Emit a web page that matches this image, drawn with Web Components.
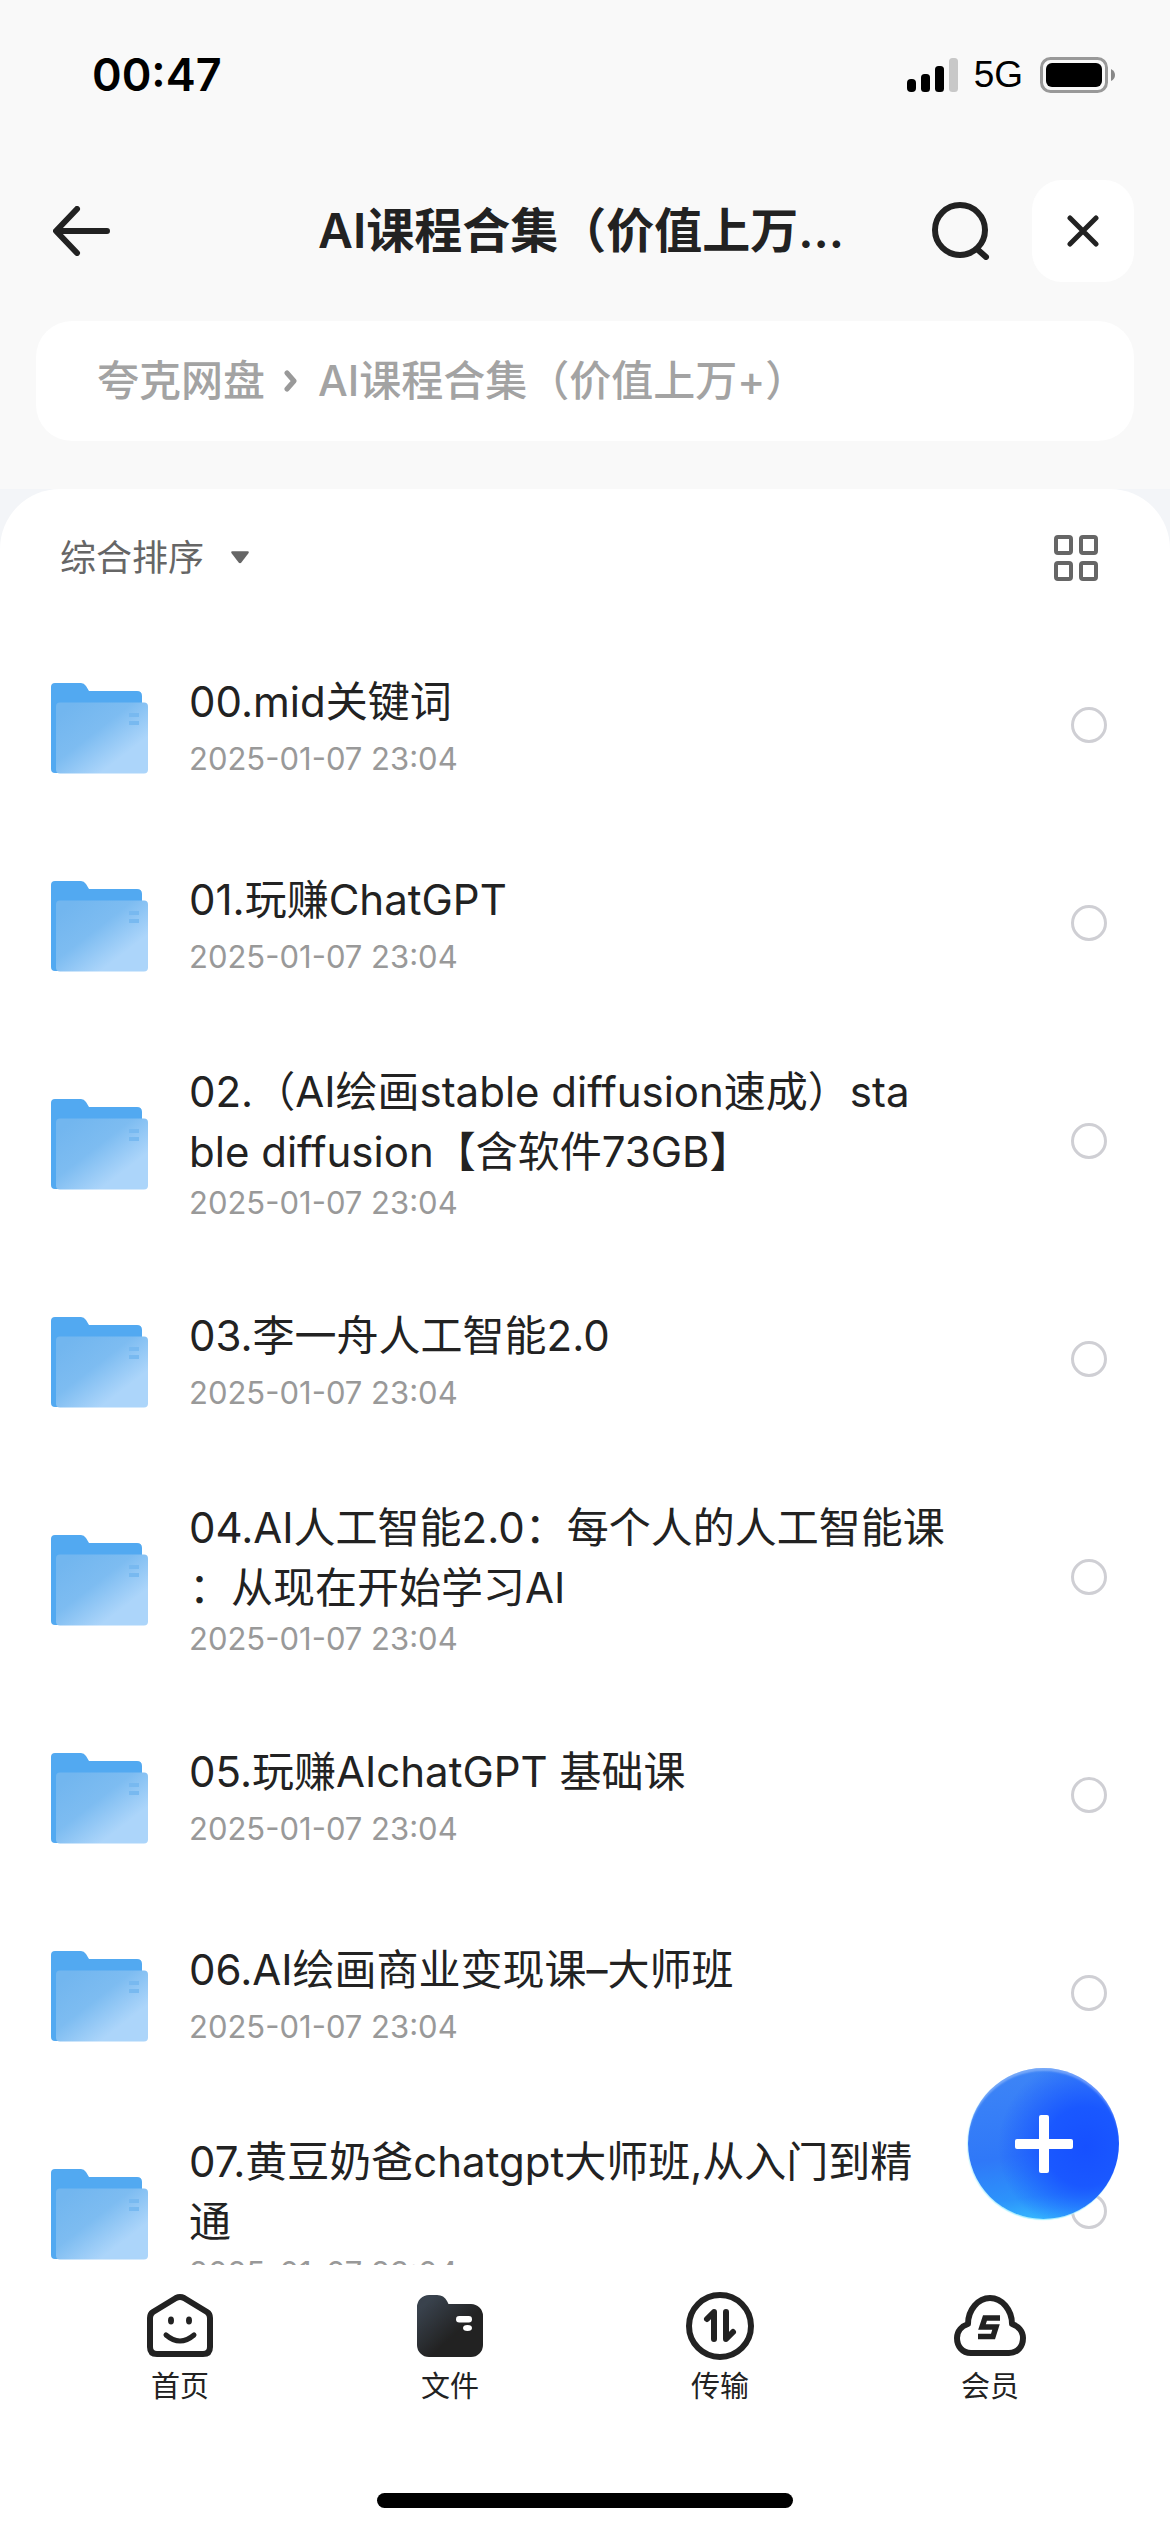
<!DOCTYPE html>
<html lang="zh">
<head>
<meta charset="utf-8">
<title>夸克网盘</title>
<style>
html, body { margin: 0; padding: 0; }
body {
	width: 1170px;
	height: 2532px;
	overflow: hidden;
	background: linear-gradient(#f9f9f9 489px, #f3f5f8 489px);
	font-family: Inter, "Noto Sans CJK SC", sans-serif;
	color: #222;
}
.page { display: flex; flex-direction: column; height: 2532px; position: relative; }
</style>
</head>
<body>
<div class="page">
	<status-bar time="00:47"></status-bar>
	<nav-bar>AI课程合集（价值上万...</nav-bar>
	<path-crumb root="夸克网盘">AI课程合集（价值上万+）</path-crumb>
	<file-panel>
		<file-row date="2025-01-07 23:04">00.mid关键词</file-row>
		<file-row date="2025-01-07 23:04">01.玩赚ChatGPT</file-row>
		<file-row date="2025-01-07 23:04" lines="2">02.（AI绘画stable diffusion速成）sta<br>ble diffusion【含软件73GB】</file-row>
		<file-row date="2025-01-07 23:04">03.李一舟人工智能2.0</file-row>
		<file-row date="2025-01-07 23:04" lines="2">04.AI人工智能2.0：每个人的人工智能课<br>：从现在开始学习AI</file-row>
		<file-row date="2025-01-07 23:04">05.玩赚AIchatGPT 基础课</file-row>
		<file-row date="2025-01-07 23:04">06.AI绘画商业变现课–大师班</file-row>
		<file-row date="2025-01-07 23:04" lines="2">07.黄豆奶爸chatgpt大师班,从入门到精<br>通</file-row>
	</file-panel>
	<tab-bar>
		<tab-item label="首页" icon="home"></tab-item>
		<tab-item label="文件" icon="files"></tab-item>
		<tab-item label="传输" icon="transfer"></tab-item>
		<tab-item label="会员" icon="vip"></tab-item>
	</tab-bar>
	<add-fab></add-fab>
</div>

<script>
const statusBarTemplate = document.createElement('template');
statusBarTemplate.innerHTML = `
<style>
:host { display: flex; align-items: center; height: 150px; box-sizing: border-box; padding: 0 55px 0 92px; flex: none; color: #000; }
.time { font: 600 45px/50px Inter, sans-serif; letter-spacing: 0; }
.right { margin-left: auto; display: flex; align-items: center; }
.net { font: 400 37px/40px "Liberation Sans", sans-serif; margin: 0 17px 0 16px; color: #000; }
svg { display: block; }
</style>
<span class="time"></span>
<div class="right">
	<svg width="51" height="34" viewBox="0 0 51 34">
		<rect x="0" y="21" width="9" height="13" rx="4" fill="#000"/>
		<rect x="14" y="16" width="9" height="18" rx="3.5" fill="#000"/>
		<rect x="28" y="8" width="9" height="26" rx="3.5" fill="#000"/>
		<rect x="42" y="0" width="9" height="34" rx="3.5" fill="#c8c8c8"/>
	</svg>
	<span class="net">5G</span>
	<svg width="75" height="36" viewBox="0 0 75 36">
		<rect x="1.5" y="1.5" width="65" height="33" rx="9" fill="none" stroke="#999" stroke-width="3"/>
		<rect x="6" y="6" width="56" height="24" rx="6" fill="#000"/>
		<path d="M71 12 q4 2 4 6 t-4 6 Z" fill="#888"/>
	</svg>
</div>`;

class StatusBar extends HTMLElement {
	constructor() {
		super();
		this.attachShadow({ mode: 'open' }).append(statusBarTemplate.content.cloneNode(true));
		this.shadowRoot.querySelector('.time').textContent = this.getAttribute('time');
	}
}
customElements.define('status-bar', StatusBar);

const navBarTemplate = document.createElement('template');
navBarTemplate.innerHTML = `
<style>
:host { display: flex; align-items: center; height: 102px; margin-top: 30px; padding: 0 36px 0 53px; flex: none; }
.title { margin-left: 207px; font: 600 48px/60px Inter, "Noto Sans CJK SC", sans-serif; color: #222; white-space: nowrap; }
.search { margin-left: auto; margin-right: 42px; display: block; }
.close { width: 102px; height: 102px; border-radius: 30px; background: #fff; display: flex; align-items: center; justify-content: center; }
svg { display: block; flex: none; }
</style>
<svg width="58" height="50" viewBox="0 0 58 50" fill="none" stroke="#222" stroke-width="6" stroke-linecap="round" stroke-linejoin="round">
	<path d="M54 25 H4 M24 3 L3 25 L24 47"/>
</svg>
<span class="title"><slot></slot></span>
<svg class="search" width="58" height="58" viewBox="0 0 58 58" fill="none" stroke="#222" stroke-width="6" stroke-linecap="round">
	<circle cx="28" cy="28" r="25"/>
	<path d="M45 47 L54 55"/>
</svg>
<div class="close">
	<svg width="32" height="32" viewBox="0 0 32 32" fill="none" stroke="#222" stroke-width="5" stroke-linecap="round">
		<path d="M3 3 L29 29 M29 3 L3 29"/>
	</svg>
</div>`;

class NavBar extends HTMLElement {
	constructor() {
		super();
		this.attachShadow({ mode: 'open' }).append(navBarTemplate.content.cloneNode(true));
	}
}
customElements.define('nav-bar', NavBar);

const pathCrumbTemplate = document.createElement('template');
pathCrumbTemplate.innerHTML = `
<style>
:host { display: flex; align-items: center; height: 120px; margin: 39px 36px 48px; padding-left: 61px; background: #fff; border-radius: 36px; flex: none; font: 500 42px/50px Inter, "Noto Sans CJK SC", sans-serif; color: #a3a3a3; }
svg { margin: 0 20px 0 19px; display: block; }
</style>
<span class="root"></span>
<svg width="14" height="26" viewBox="0 0 14 26" fill="none" stroke="#999" stroke-width="5" stroke-linecap="round" stroke-linejoin="round">
	<path d="M3 5 L10 13 L3 21"/>
</svg>
<span><slot></slot></span>`;

class PathCrumb extends HTMLElement {
	constructor() {
		super();
		this.attachShadow({ mode: 'open' }).append(pathCrumbTemplate.content.cloneNode(true));
		this.shadowRoot.querySelector('.root').textContent = this.getAttribute('root');
	}
}
customElements.define('path-crumb', PathCrumb);

const filePanelTemplate = document.createElement('template');
filePanelTemplate.innerHTML = `
<style>
:host { display: flex; flex-direction: column; flex: 1; min-height: 0; background: #fff; border-radius: 60px 60px 0 0; overflow: hidden; }
.sort { display: flex; align-items: center; height: 137px; padding: 0 72px 0 60px; flex: none; font: 400 36px/46px Inter, "Noto Sans CJK SC", sans-serif; color: #666; box-sizing: border-box; }
.arrow { margin-left: 26px; display: block; }
.grid { margin-left: auto; display: block; }
.rows { flex: 1; min-height: 0; overflow: hidden; }
</style>
<div class="sort">
	<span>综合排序</span>
	<svg class="arrow" width="20" height="15" viewBox="0 0 22 16"><path d="M2.5 1 H19.5 Q21.5 1 20.5 3 L12.5 13.5 Q11 15 9.5 13.5 L1.5 3 Q0.5 1 2.5 1 Z" fill="#666"/></svg>
	<svg class="grid" width="44" height="46" viewBox="0 0 44 46" fill="none" stroke="#666" stroke-width="4">
		<rect x="2" y="2" width="15" height="16" rx="2"/>
		<rect x="27" y="2" width="15" height="16" rx="2"/>
		<rect x="2" y="28" width="15" height="16" rx="2"/>
		<rect x="27" y="28" width="15" height="16" rx="2"/>
	</svg>
</div>
<div class="rows"><slot></slot></div>`;

class FilePanel extends HTMLElement {
	constructor() {
		super();
		this.attachShadow({ mode: 'open' }).append(filePanelTemplate.content.cloneNode(true));
	}
}
customElements.define('file-panel', FilePanel);

let folderIdCounter = 0;

class FileRow extends HTMLElement {
	constructor() {
		super();
		const id = 'folder-fill-' + (folderIdCounter++);
		const twoLines = this.getAttribute('lines') === '2';
		this.attachShadow({ mode: 'open' }).innerHTML = `
<style>
:host { display: flex; align-items: center; height: ${twoLines ? 238 : 198}px; padding: 0 63px 0 50px; box-sizing: border-box; }
.folder { display: block; flex: none; margin-top: 6px; }
.text { flex: none; width: 770px; margin-left: 41px; margin-top: ${twoLines ? 3 : 0}px; }
.name { font: 400 42px/60px Inter, "Noto Sans CJK SC", sans-serif; color: #222; white-space: nowrap; }
.date { font: 400 31px/40px Inter, "Noto Sans CJK SC", sans-serif; color: #999; margin-top: ${twoLines ? 1 : 7}px; }
.radio { margin-left: auto; width: 36px; height: 36px; box-sizing: border-box; border: 3px solid #cfcfd4; border-radius: 50%; flex: none; }
</style>
<svg class="folder" width="98" height="91" viewBox="0 0 98 91">
	<defs>
		<linearGradient id="${id}" x1="0.1" y1="0.1" x2="0.9" y2="0.9">
			<stop offset="0" stop-color="#72b6ef"/>
			<stop offset="0.4" stop-color="#7dbcf1"/>
			<stop offset="0.8" stop-color="#acd5fa"/>
			<stop offset="1" stop-color="#acd5fa"/>
		</linearGradient>
	</defs>
	<path d="M5 0 H31 Q34 0 36 3 L39 8 H87 Q92 8 92 13 V86 Q92 90 88 90 H5 Q1 90 1 86 V4 Q1 0 5 0 Z" fill="#52a9f1"/>
	<rect x="6" y="19.500" width="92" height="71" rx="4" fill="url(#${id})"/>
	<rect x="79" y="30" width="10" height="4" fill="#78b9f0"/>
	<rect x="79" y="38" width="10" height="4" fill="#78b9f0"/>
</svg>
<div class="text">
	<div class="name"><slot></slot></div>
	<div class="date"></div>
</div>
<div class="radio"></div>`;
		this.shadowRoot.querySelector('.date').textContent = this.getAttribute('date');
	}
}
customElements.define('file-row', FileRow);

const tabIcons = {
	home: `<svg width="66" height="66" viewBox="0 0 66 66" fill="none" stroke="#222" stroke-width="6" stroke-linecap="round" stroke-linejoin="round">
		<path d="M3 25 Q3 21 6 19 L29 5 Q33 3 37 5 L60 19 Q63 21 63 25 V54 Q63 61 56 61 H10 Q3 61 3 54 Z"/>
		<path d="M19 42 Q33 54 47 42" stroke-width="5"/>
		<ellipse cx="24" cy="27.500" rx="3" ry="4" fill="#222" stroke="none"/>
		<ellipse cx="42" cy="27.500" rx="3" ry="4" fill="#222" stroke="none"/>
	</svg>`,
	files: `<svg width="66" height="66" viewBox="0 0 66 66">
		<defs><linearGradient id="tab-files" x1="0.05" y1="0.05" x2="0.6" y2="0.6">
			<stop offset="0.15" stop-color="#39424d"/><stop offset="1" stop-color="#222"/>
		</linearGradient></defs>
		<path d="M0 14 A12 12 0 0 1 12 2 H20 Q27 2 30 8 L31.500 11 H54 A12 12 0 0 1 66 23 V52 A12 12 0 0 1 54 64 H12 A12 12 0 0 1 0 52 Z" fill="url(#tab-files)"/>
		<rect x="39" y="23" width="16" height="6.500" rx="3.250" fill="#fff"/>
		<ellipse cx="50.500" cy="35" rx="4.500" ry="3" fill="#fff"/>
	</svg>`,
	transfer: `<svg width="70" height="70" viewBox="0 0 70 70" fill="none" stroke="#222" stroke-width="6" stroke-linecap="round" stroke-linejoin="round">
		<circle cx="35" cy="35" r="31"/>
		<path d="M29 48 V21 L22 28"/>
		<path d="M41 21 V48 L48 41"/>
	</svg>`,
	vip: `<svg width="72" height="62" viewBox="0 -2 72 62" fill="none" stroke="#222" stroke-width="6" stroke-linejoin="round">
		<path d="M17 56 C8 56 3 49 3 41 C3 34 8 29 14 27 C14 13 24 1 36 1 C48 1 58 13 58 27 C64 29 69 34 69 41 C69 49 64 56 55 56 Z"/>
		<path d="M46 21 H31 L28 30 H42 L39 39.500 H24" stroke-width="5.500" stroke-linejoin="miter"/>
	</svg>`
};

class TabItem extends HTMLElement {
	constructor() {
		super();
		this.attachShadow({ mode: 'open' }).innerHTML = `
<style>
:host { display: flex; flex-direction: column; align-items: center; flex: 1; }
.icon { height: 70px; display: flex; align-items: center; justify-content: center; }
svg { display: block; }
.label { font: 400 29px/36px Inter, "Noto Sans CJK SC", sans-serif; color: #222; margin-top: 8px; }
</style>
<div class="icon">${tabIcons[this.getAttribute('icon')]}</div>
<span class="label">${this.getAttribute('label')}</span>`;
	}
}
customElements.define('tab-item', TabItem);

const tabBarTemplate = document.createElement('template');
tabBarTemplate.innerHTML = `
<style>
:host { display: flex; flex-direction: column; height: 267px; background: #fff; flex: none; box-sizing: border-box; padding-top: 26px; }
.items { display: flex; padding: 0 45px; }
.indicator { width: 416px; height: 15px; border-radius: 8px; background: #000; margin: auto auto 24px; }
</style>
<div class="items"><slot></slot></div>
<div class="indicator"></div>`;

class TabBar extends HTMLElement {
	constructor() {
		super();
		this.attachShadow({ mode: 'open' }).append(tabBarTemplate.content.cloneNode(true));
	}
}
customElements.define('tab-bar', TabBar);

const addFabTemplate = document.createElement('template');
addFabTemplate.innerHTML = `
<style>
:host { position: absolute; left: 968px; top: 2068px; width: 151px; height: 151px; border-radius: 50%; display: flex; align-items: center; justify-content: center;
	background:
		radial-gradient(circle at 78% 52%, #1650ff 0, #1a58ff 28%, rgba(26,88,255,0) 62%),
		linear-gradient(172deg, #3f86f6 0%, #2f78f8 55%, #2c93fb 80%, #38c4ff 98%);
	box-shadow: inset 0 4px 2px -1px rgba(255,255,255,.3), 0 2px 1px -1px #a6f0ff, -1px 1px 1px #c8f5ff; }
svg { display: block; }
</style>
<svg width="58" height="58" viewBox="0 0 58 58" fill="#fff">
	<rect x="24" y="0" width="10" height="58" rx="2"/>
	<rect x="0" y="24" width="58" height="10" rx="2"/>
</svg>`;

class AddFab extends HTMLElement {
	constructor() {
		super();
		this.attachShadow({ mode: 'open' }).append(addFabTemplate.content.cloneNode(true));
	}
}
customElements.define('add-fab', AddFab);
</script>
</body>
</html>
